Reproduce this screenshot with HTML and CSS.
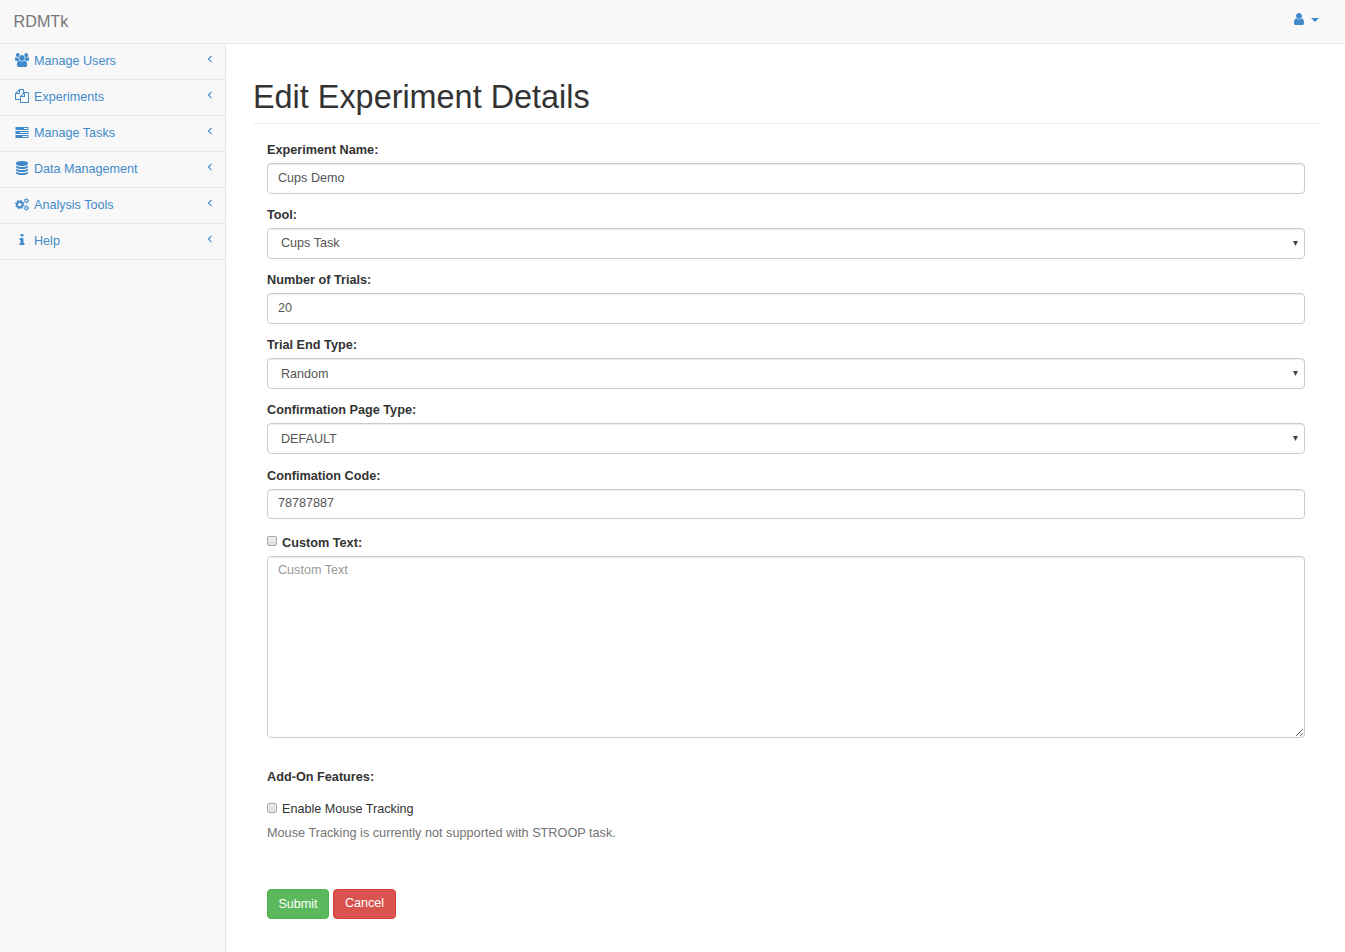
FILE: index.html
```html
<!DOCTYPE html>
<html lang="en">
<head>
<meta charset="utf-8">
<title>RDMTk</title>
<link rel="stylesheet" href="styles.css">
</head>
<body>
<header class="navbar">
  <a class="brand">RDMTk</a>
  <a class="user-menu">
    <svg class="user-icon" viewBox="256 128 1280 1536" preserveAspectRatio="none"><path d="M1536 1399q0 109-62.5 187t-150.5 78h-854q-88 0-150.5-78t-62.5-187q0-85 8.5-160.5t31.5-152 58.5-131 94-89 134.5-34.5q131 128 313 128t313-128q76 0 134.5 34.5t94 89 58.5 131 31.5 152 8.5 160.5zm-256-887q0 159-112.5 271.5t-271.5 112.5-271.5-112.5-112.5-271.5 112.5-271.5 271.5-112.5 271.5 112.5 112.5 271.5z"/></svg>
    <span class="caret"></span>
  </a>
</header>
<div class="layout">
  <nav class="sidebar">
    <a class="item"><svg class="icon" viewBox="0 0 1920 1792" preserveAspectRatio="none"><path d="M593 896q-162 5-265 128h-134q-82 0-138-40.5t-56-118.5q0-353 124-353 6 0 43.5 21t97.5 42.5 119 21.5q67 0 133-23-5 37-5 66 0 159 81 293zm1071 637q0 120-73 189.5t-194 69.5h-874q-121 0-194-69.5t-73-189.5q0-53 3.5-103.5t14-109 26.5-108.5 43-97.5 62-81 85.5-53.5 111.5-20q10 0 43 21.5t73 48 107 48 135 21.5 135-21.5 107-48 73-48 43-21.5q61 0 111.5 20t85.5 53.5 62 81 43 97.5 26.5 108.5 14 109 3.5 103.5zm-1024-1277q0 106-75 181t-181 75-181-75-75-181 75-181 181-75 181 75 75 181zm704 384q0 159-112.5 271.5t-271.5 112.5-271.5-112.5-112.5-271.5 112.5-271.5 271.5-112.5 271.5 112.5 112.5 271.5zm576 225q0 78-56 118.5t-138 40.5h-134q-103-123-265-128 81-134 81-293 0-37-5-66 66 23 133 23 59 0 119-21.5t97.5-42.5 43.5-21q124 0 124 353zm-128-609q0 106-75 181t-181 75-181-75-75-181 75-181 181-75 181 75 75 181z"/></svg><span class="name">Manage Users</span><svg class="arrow" viewBox="0 0 6 8"><path d="M4.6 .9 1.4 4l3.2 3.1"/></svg></a>
    <a class="item"><svg class="icon" viewBox="0 0 1792 1792"><path d="M1696 384q40 0 68 28t28 68v1216q0 40-28 68t-68 28h-960q-40 0-68-28t-28-68v-288h-544q-40 0-68-28t-28-68v-672q0-40 20-88t48-76l408-408q28-28 76-48t88-20h416q40 0 68 28t28 68v328q68-40 128-40h416zm-544 213l-299 299h299v-299zm-640-384l-299 299h299v-299zm196 647l316-316v-416h-384v416q0 40-28 68t-68 28h-416v640h512v-256q0-40 20-88t48-76zm956 804v-1152h-384v416q0 40-28 68t-68 28h-416v640h896z"/></svg><span class="name">Experiments</span><svg class="arrow" viewBox="0 0 6 8"><path d="M4.6 .9 1.4 4l3.2 3.1"/></svg></a>
    <a class="item"><svg class="icon" viewBox="0 0 14 14"><path fill-rule="evenodd" d="M.5 2h13v3H.5zM.5 6h13v3H.5zM.5 10h13v3H.5zM9 3v1h3.5V3zM5 7v1h7.5V7zM7.5 11v1h5v-1z"/></svg><span class="name">Manage Tasks</span><svg class="arrow" viewBox="0 0 6 8"><path d="M4.6 .9 1.4 4l3.2 3.1"/></svg></a>
    <a class="item"><svg class="icon" viewBox="0 0 1792 1792"><path d="M896 768q237 0 443-43t325-127v170q0 69-103 128t-280 93.5-385 34.5-385-34.5-280-93.5-103-128v-170q119 84 325 127t443 43zm0 768q237 0 443-43t325-127v170q0 69-103 128t-280 93.5-385 34.5-385-34.5-280-93.5-103-128v-170q119 84 325 127t443 43zm0-384q237 0 443-43t325-127v170q0 69-103 128t-280 93.5-385 34.5-385-34.5-280-93.5-103-128v-170q119 84 325 127t443 43zm0-1152q208 0 385 34.5t280 93.5 103 128v128q0 69-103 128t-280 93.5-385 34.5-385-34.5-280-93.5-103-128v-128q0-69 103-128t280-93.5 385-34.5z"/></svg><span class="name">Data Management</span><svg class="arrow" viewBox="0 0 6 8"><path d="M4.6 .9 1.4 4l3.2 3.1"/></svg></a>
    <a class="item"><svg class="icon gears" viewBox="0 0 14 14"><circle cx="4.7" cy="7.5" r="2.8" stroke-width="1.9"/><circle cx="4.7" cy="7.5" r="4.1" stroke-width="1.2" stroke-dasharray="1.5 1.72"/><circle cx="11.4" cy="3.8" r="1.5" stroke-width="1.1"/><circle cx="11.4" cy="3.8" r="2.3" stroke-width=".8" stroke-dasharray="1.1 1.31"/><circle cx="11.4" cy="11" r="1.5" stroke-width="1.1"/><circle cx="11.4" cy="11" r="2.3" stroke-width=".8" stroke-dasharray="1.1 1.31"/></svg><span class="name">Analysis Tools</span><svg class="arrow" viewBox="0 0 6 8"><path d="M4.6 .9 1.4 4l3.2 3.1"/></svg></a>
    <a class="item"><svg class="icon" viewBox="0 0 1792 1792"><path d="M1216 1344v128q0 26-19 45t-45 19h-512q-26 0-45-19t-19-45v-128q0-26 19-45t45-19h64v-384h-64q-26 0-45-19t-19-45v-128q0-26 19-45t45-19h384q26 0 45 19t19 45v576h64q26 0 45 19t19 45zm-128-1152v192q0 26-19 45t-45 19h-256q-26 0-45-19t-19-45v-192q0-26 19-45t45-19h256q26 0 45 19t19 45z"/></svg><span class="name">Help</span><svg class="arrow" viewBox="0 0 6 8"><path d="M4.6 .9 1.4 4l3.2 3.1"/></svg></a>
  </nav>
  <main class="page">
    <h1 class="title">Edit Experiment Details</h1>
    <form class="form">
      <div class="group"><label class="label">Experiment Name:</label><input class="control" type="text" value="Cups Demo"></div>
      <div class="group"><label class="label">Tool:</label><div class="control select"><span>Cups Task</span><svg class="drop" viewBox="0 0 5 5"><path d="M0 0h5L2.5 5z"/></svg></div></div>
      <div class="group"><label class="label">Number of Trials:</label><input class="control" type="text" value="20"></div>
      <div class="group"><label class="label">Trial End Type:</label><div class="control select low"><span>Random</span><svg class="drop" viewBox="0 0 5 5"><path d="M0 0h5L2.5 5z"/></svg></div></div>
      <div class="group"><label class="label">Confirmation Page Type:</label><div class="control select low"><span>DEFAULT</span><svg class="drop" viewBox="0 0 5 5"><path d="M0 0h5L2.5 5z"/></svg></div></div>
      <div class="group code"><label class="label">Confimation Code:</label><input class="control" type="text" value="78787887"></div>
      <div class="custom">
        <label class="check bold"><input class="box" type="checkbox"><span>Custom Text:</span></label>
        <textarea class="control area" placeholder="Custom Text"></textarea>
      </div>
      <div class="label addon">Add-On Features:</div>
      <label class="check"><input class="box" type="checkbox"><span>Enable Mouse Tracking</span></label>
      <p class="hint">Mouse Tracking is currently not supported with STROOP task.</p>
      <div class="actions"><button class="btn submit" type="button">Submit</button><button class="btn cancel" type="button">Cancel</button></div>
    </form>
  </main>
</div>
</body>
</html>
```
FILE: styles.css
```css
* { box-sizing: border-box; }
body {
  margin: 0;
  height: 952px;
  overflow: hidden;
  display: flex;
  flex-direction: column;
  background: #f8f8f8;
  color: #333;
  font: 12.6px/18px "Liberation Sans", Arial, sans-serif;
}
.navbar {
  flex: none;
  height: 44px;
  display: flex;
  justify-content: space-between;
  border-bottom: 1px solid #e7e7e7;
  padding: 0 26px 0 13.5px;
}
.brand { color: #777; font-size: 16.2px; line-height: 42px; }
.user-menu { display: flex; align-items: flex-start; padding-top: 13px; }
.user-icon { width: 10px; height: 12px; fill: #428bca; margin-right: 7px; }
.caret { margin-top: 5px; border: 4px solid transparent; border-top-color: #428bca; border-bottom: 0; }
.layout { flex: 1; display: flex; }
.sidebar { width: 225px; }
.item {
  display: flex;
  height: 36px;
  padding: 8px 12px 0 15px;
  border-bottom: 1px solid #e7e7e7;
  color: #428bca;
}
.icon { width: 14px; height: 14px; margin: 1px 5px 0 0; fill: #428bca; }
.gears { fill: none; stroke: #428bca; }
.name { flex: 1; }
.arrow { width: 6px; height: 8px; margin-top: 3px; fill: none; stroke: #428bca; stroke-width: 1.1; }
.page {
  flex: 1;
  background: #fff;
  border-left: 1px solid #e7e7e7;
  padding: 35px 27px 0;
}
.title {
  margin: 0 0 15px;
  height: 45px;
  border-bottom: 1px solid #eee;
  font-size: 32.4px;
  font-weight: 400;
  line-height: 36px;
}
.form { padding: 0 13px 0 14px; }
.group { height: 65px; padding-top: 2px; }
.label { display: block; height: 22px; font-size: 12.7px; font-weight: 700; }
.control {
  display: block;
  width: 100%;
  height: 31px;
  border: 1px solid #ccc;
  border-radius: 4px;
  box-shadow: inset 0 1px 1px rgba(0, 0, 0, .075);
  background: #fff;
  color: #555;
  font: inherit;
  padding: 0 10px 2px;
}
.select { display: flex; justify-content: space-between; align-items: center; padding: 0 6px 2px 13px; }
.select.low { padding-bottom: 0; }
.drop { width: 5px; height: 5px; fill: #444; }
.select:not(.low) .drop { margin-top: 2px; }
.group.code { padding-top: 3px; }
.code .control { height: 30px; padding-bottom: 3px; }
.check { display: flex; height: 18px; }
.bold { font-size: 12.7px; font-weight: 700; }
.bold span { padding-top: 1px; }
.box {
  appearance: none;
  width: 10px;
  height: 10px;
  margin: 3px 5px 0 0;
  border: 1px solid #aaa;
  border-radius: 2px;
  background: linear-gradient(#eee, #dcdcdc);
}
.custom { padding-top: 4px; height: 239px; }
.area { height: 182px; margin-top: 5px; padding: 4px 10px; resize: vertical; }
.area::placeholder { color: #999; }
.addon { height: 32px; }
.hint { margin: 6px 0 47px; color: #737373; font-size: 12.7px; }
.actions { display: flex; gap: 4px; }
.btn {
  height: 30px;
  padding: 0 0 2px;
  border: 1px solid;
  border-radius: 4px;
  color: #fff;
  font: inherit;
}
.submit { width: 62px; padding: 0; background: #5cb85c; border-color: #4cae4c; }
.cancel { width: 63px; background: #d9534f; border-color: #d43f3a; }
```
